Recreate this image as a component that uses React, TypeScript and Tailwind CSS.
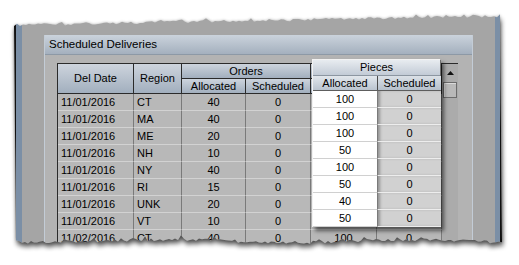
import React from "react";

const rows = [
  ["11/01/2016", "CT", "40", "0", "100", "0"],
  ["11/01/2016", "MA", "40", "0", "100", "0"],
  ["11/01/2016", "ME", "20", "0", "100", "0"],
  ["11/01/2016", "NH", "10", "0", "50", "0"],
  ["11/01/2016", "NY", "40", "0", "100", "0"],
  ["11/01/2016", "RI", "15", "0", "50", "0"],
  ["11/01/2016", "UNK", "20", "0", "40", "0"],
  ["11/01/2016", "VT", "10", "0", "50", "0"],
  ["11/02/2016", "CT", "40", "0", "100", "0"],
  ["11/02/2016", "MA", "40", "0", "100", "0"],
];

const hdr =
  "flex items-center justify-center border-r border-b border-[#2b2b2b] bg-linear-to-b from-[#cdd4dd] to-[#a2afbe] leading-none";
const cell =
  "flex items-center border-r border-b border-r-[#7a7a7a] border-b-[#d2d2d2] bg-[#b8b8b8] leading-none";

// torn paper outline, drawn over the screenshot
const makePaper = () => {
  let s = 17;
  const rnd = () => {
    s = (s * 9301 + 49297) % 233280;
    return s / 233280;
  };
  const pts: string[] = [];
  for (let x = 14; x <= 502; x += 3) {
    let y = 25 - ((x - 14) * 9) / 488 + (rnd() - 0.5) * 2.6;
    if (rnd() < 0.1) y -= 2;
    pts.push(`${x},${y.toFixed(1)}`);
  }
  for (let x = 502; x >= 14; x -= 3) {
    let y = 241 + Math.sin(x / 37) * 1.4 + (rnd() - 0.5) * 3;
    if (rnd() < 0.09) y -= 3;
    pts.push(`${x},${y.toFixed(1)}`);
  }
  return "M" + pts.join(" L") + " Z";
};

const TornEdges = () => {
  const paper = makePaper();
  const outside = `M0 0H519V265H0Z ${paper}`;
  return (
    <svg className="pointer-events-none absolute inset-0" width={519} height={265}>
      <defs>
        <clipPath id="outside">
          <path d={outside} clipRule="evenodd" />
        </clipPath>
        <filter id="soft" x="-10%" y="-10%" width="120%" height="120%">
          <feGaussianBlur stdDeviation="2.4" />
        </filter>
        <filter id="glow" x="-10%" y="-10%" width="120%" height="120%">
          <feGaussianBlur stdDeviation="1.6" />
        </filter>
      </defs>
      <path d={outside} fill="#ffffff" fillRule="evenodd" />
      <g clipPath="url(#outside)">
        <path d={paper} fill="#000" opacity="0.65" filter="url(#soft)" transform="translate(1,4)" />
        <path d={paper} fill="#000" opacity="0.25" filter="url(#glow)" />
      </g>
    </svg>
  );
};

const PiecesPopup = () => (
  <div className="absolute left-[254px] top-[-5px] w-[129px] border-l border-t border-l-[#f2f2f2] border-t-[#f2f2f2] border-r border-r-[#6f6f6f] shadow-[3px_4px_4px_rgba(0,0,0,0.55)]">
    <div className="flex h-[16px] items-center justify-center border-b border-[#8c96a1] bg-linear-to-b from-[#e8ecf0] to-[#c2cbd6] leading-none">
      Pieces
    </div>
    <div className="grid h-[15px] grid-cols-[65px_63px] border-b border-[#5e5e5e]">
      <div className="flex items-center justify-center border-r border-[#4a4a4a] bg-linear-to-b from-[#e2e7ec] to-[#bac4cf] leading-none">
        Allocated
      </div>
      <div className="flex items-center justify-center bg-linear-to-b from-[#dbe1e7] to-[#b6c0cb] leading-none">
        Scheduled
      </div>
    </div>
    {rows.slice(0, 8).map((r, i) => (
      <div key={i} className="grid h-[17px] grid-cols-[65px_63px]">
        <div className="flex items-center justify-center border-r border-b border-r-[#7a7a7a] border-b-[#d0d0d0] bg-white leading-none">
          {r[4]}
        </div>
        <div className="flex items-center justify-center border-b border-b-[#ededed] bg-[#d1d1d1] leading-none shadow-[inset_3px_0_3px_-1px_rgba(0,0,0,0.3)]">
          {r[5]}
        </div>
      </div>
    ))}
  </div>
);

const Grid = () => (
  <div className="relative border-l border-t border-[#2b2b2b]">
    <div className="grid grid-cols-[76px_48px_64px_65px_66px_65px] grid-rows-[15px_15px]">
      <div className={`${hdr} row-span-2`}>Del Date</div>
      <div className={`${hdr} row-span-2`}>Region</div>
      <div className={`${hdr} col-span-2`}>Orders</div>
      {/* pieces header sits under the popup */}
      <div className={`${hdr} col-span-2`} />
      <div className={hdr}>Allocated</div>
      <div className={hdr}>Scheduled</div>
      <div className={hdr} />
      <div className={hdr} />
    </div>
    {rows.map((r, i) => (
      <div key={i} className="grid h-[17px] grid-cols-[76px_48px_64px_65px_66px_65px]">
        <div className={`${cell} pl-[3px]`}>{r[0]}</div>
        <div className={`${cell} pl-[3px]`}>{r[1]}</div>
        <div className={`${cell} justify-center`}>{r[2]}</div>
        <div className={`${cell} justify-center`}>{r[3]}</div>
        <div className={`${cell} justify-center`}>{i >= 8 ? r[4] : ""}</div>
        <div className={`${cell} justify-center`}>{i >= 8 ? r[5] : ""}</div>
      </div>
    ))}
    <PiecesPopup />
  </div>
);

const ScrollBar = () => (
  <div className="flex w-[16px] flex-col self-stretch border-t border-[#2b2b2b] bg-[#ababab]">
    <div className="flex h-[18px] items-center justify-center">
      <svg width="7" height="4" viewBox="0 0 7 4">
        <path d="M3.5 0 L7 4 L0 4 Z" fill="#111" />
      </svg>
    </div>
    <div className="mx-[1px] h-[16px] border border-[#6c6c6c] bg-[#b9b9b9] shadow-[inset_1px_1px_0_#dadada]" />
  </div>
);

export default function App() {
  return (
    <div className="relative h-[265px] w-[519px] overflow-hidden bg-white font-['Liberation_Sans',Arial,sans-serif] text-[11px] text-black">
      <div className="ml-[14px] flex h-[265px] w-[488px]">
        <div className="w-[2px] bg-[#111]" />
        <div className="w-[6px] bg-[#7b8fa6]" />
        <div className="flex-1 overflow-hidden bg-[#a5a5a5] pl-[22px] pr-[22px] pt-[35px]">
          <div className="h-full border-x border-[#c3ccd6]">
            <div className="flex h-[20px] items-center border-b border-[#8d99a6] bg-linear-to-b from-[#cbd3dc] to-[#a4b0be] pl-[4px] text-[11.5px] leading-none">
              Scheduled Deliveries
            </div>
            <div className="flex h-full items-start bg-[#b3b3b3] pl-[12px] pt-[8px]">
              <Grid />
              <ScrollBar />
              <div className="h-full flex-1" />
            </div>
          </div>
        </div>
        <div className="w-[5px] bg-[#7b8fa6]" />
        <div className="w-[2px] bg-[#111]" />
      </div>
      <TornEdges />
    </div>
  );
}
